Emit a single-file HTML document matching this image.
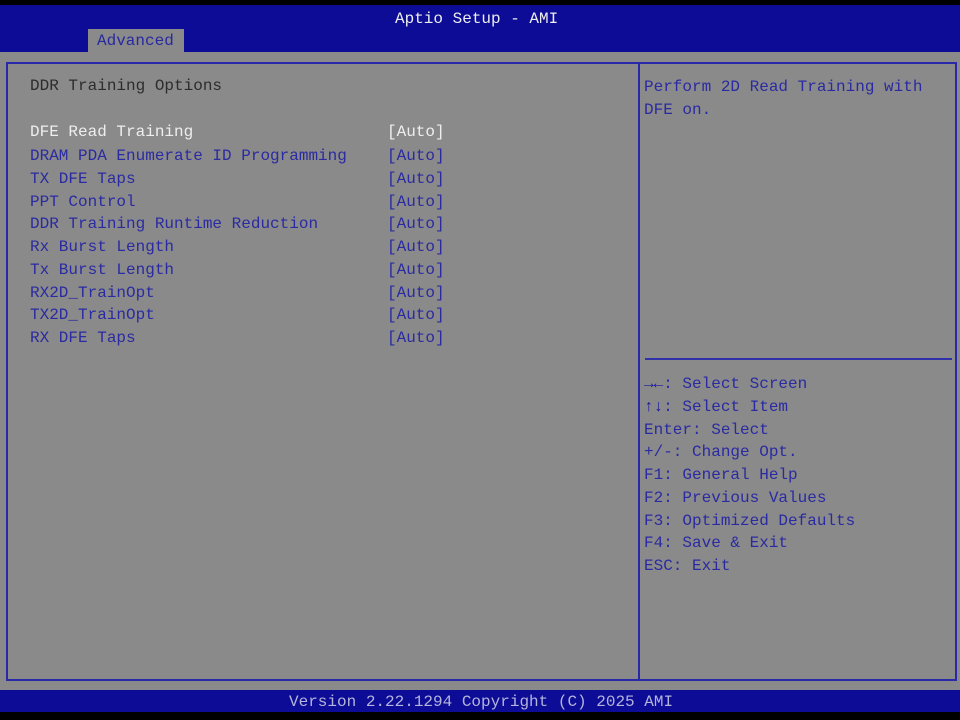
<!DOCTYPE html>
<html><head><style>
*{margin:0;padding:0}
body{width:960px;height:720px;background:#8a8a8a;position:relative;overflow:hidden;font-family:"Liberation Mono",monospace;font-size:16px;}
.t{position:absolute;white-space:pre;line-height:20px}
#top{position:absolute;left:0;top:0;width:960px;height:5px;background:#000}
#hdr{position:absolute;left:0;top:5px;width:960px;height:47px;background:#0c0c96}
#tab{position:absolute;left:88px;top:29px;width:96px;height:23px;background:#8a8a8a}
#box{position:absolute;left:6px;top:62px;width:947px;height:615px;border:2px solid #2828a8}
#div{position:absolute;left:638px;top:62px;width:2px;height:617px;background:#2828a8}
#hl{position:absolute;left:645px;top:358px;width:307px;height:2px;background:#3030a8}
#ftr{position:absolute;left:0;top:690px;width:960px;height:22px;background:#0c0c96}
#bot{position:absolute;left:0;top:712px;width:960px;height:8px;background:#000}
.b{color:#2a2aa2}.w{color:#eeeeee}.d{color:#2c2c2c}
</style></head><body>
<div id="top"></div><div id="hdr"></div><div id="tab"></div>
<div id="box"></div><div id="div"></div><div id="hl"></div>
<div id="ftr"></div><div id="bot"></div>
<div class="t w" style="left:395px;top:9px">Aptio Setup - AMI</div>
<div class="t b" style="left:97px;top:31px;color:#2828a0">Advanced</div>
<div class="t d" style="left:30px;top:76px">DDR Training Options</div>
<div class="t w" style="left:30px;top:122px">DFE Read Training</div>
<div class="t w" style="left:387px;top:122px">[Auto]</div>
<div class="t b" style="left:30px;top:145px;line-height:22.75px">DRAM PDA Enumerate ID Programming
TX DFE Taps
PPT Control
DDR Training Runtime Reduction
Rx Burst Length
Tx Burst Length
RX2D_TrainOpt
TX2D_TrainOpt
RX DFE Taps</div>
<div class="t b" style="left:387px;top:145px;line-height:22.75px">[Auto]
[Auto]
[Auto]
[Auto]
[Auto]
[Auto]
[Auto]
[Auto]
[Auto]</div>
<div class="t b" style="left:644px;top:76px;line-height:23px">Perform 2D Read Training with
DFE on.</div>
<div class="t b" style="left:644px;top:373px;line-height:22.75px"><span style="color:#1818a0">→←</span>: Select Screen
<span style="color:#1818a0">↑↓</span>: Select Item
Enter: Select
+/-: Change Opt.
F1: General Help
F2: Previous Values
F3: Optimized Defaults
F4: Save &amp; Exit
ESC: Exit</div>
<div class="t" style="left:289px;top:692px;color:#b4b4dc">Version 2.22.1294 Copyright (C) 2025 AMI</div>
</body></html>
